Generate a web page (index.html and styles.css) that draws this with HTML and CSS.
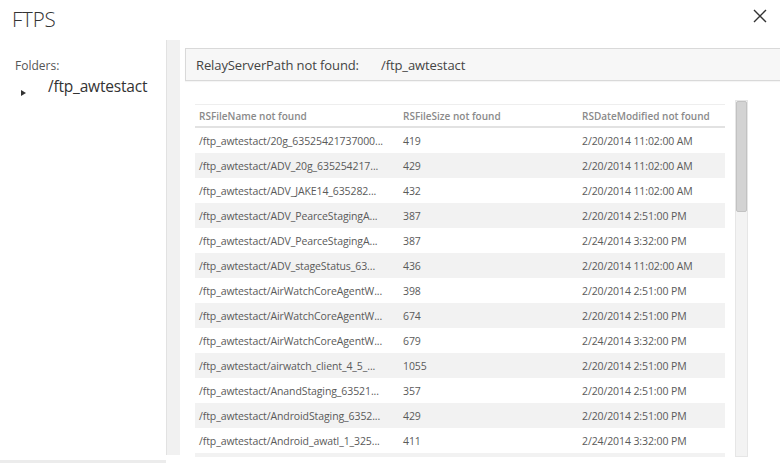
FILE: index.html
```html
<!DOCTYPE html>
<html>
<head>
<meta charset="utf-8">
<link rel="stylesheet" href="styles.css">
</head>
<body>
<div class="dialog">
  <div class="header">
    <div class="title">FTPS</div>
    <svg class="close" width="14" height="14" viewBox="0 0 14 14"><path d="M1 1L13 13M13 1L1 13" stroke="#333" stroke-width="1.4" fill="none"/></svg>
  </div>
  <div class="body">
    <div class="sidebar">
      <div class="folders-label">Folders:</div>
      <div class="folder">
        <span class="caret"></span>
        <span class="folder-name">/ftp_awtestact</span>
      </div>
    </div>
    <div class="splitter"></div>
    <div class="main">
      <div class="relay">
        <span class="relay-label">RelayServerPath not found:</span>
        <span class="relay-value">/ftp_awtestact</span>
      </div>
      <div class="grid-wrap">
        <div class="grid">
          <div class="row head">
            <div class="c1">RSFileName not found</div>
            <div class="c2">RSFileSize not found</div>
            <div class="c3">RSDateModified not found</div>
          </div>
          <div class="row"><div class="c1">/ftp_awtestact/20g_63525421737000...</div><div class="c2">419</div><div class="c3">2/20/2014 11:02:00 AM</div></div>
          <div class="row alt"><div class="c1">/ftp_awtestact/ADV_20g_635254217...</div><div class="c2">429</div><div class="c3">2/20/2014 11:02:00 AM</div></div>
          <div class="row"><div class="c1">/ftp_awtestact/ADV_JAKE14_635282...</div><div class="c2">432</div><div class="c3">2/20/2014 11:02:00 AM</div></div>
          <div class="row alt"><div class="c1">/ftp_awtestact/ADV_PearceStagingA...</div><div class="c2">387</div><div class="c3">2/20/2014 2:51:00 PM</div></div>
          <div class="row"><div class="c1">/ftp_awtestact/ADV_PearceStagingA...</div><div class="c2">387</div><div class="c3">2/24/2014 3:32:00 PM</div></div>
          <div class="row alt"><div class="c1">/ftp_awtestact/ADV_stageStatus_63...</div><div class="c2">436</div><div class="c3">2/20/2014 11:02:00 AM</div></div>
          <div class="row"><div class="c1">/ftp_awtestact/AirWatchCoreAgentW...</div><div class="c2">398</div><div class="c3">2/20/2014 2:51:00 PM</div></div>
          <div class="row alt"><div class="c1">/ftp_awtestact/AirWatchCoreAgentW...</div><div class="c2">674</div><div class="c3">2/20/2014 2:51:00 PM</div></div>
          <div class="row"><div class="c1">/ftp_awtestact/AirWatchCoreAgentW...</div><div class="c2">679</div><div class="c3">2/24/2014 3:32:00 PM</div></div>
          <div class="row alt"><div class="c1">/ftp_awtestact/airwatch_client_4_5_...</div><div class="c2">1055</div><div class="c3">2/20/2014 2:51:00 PM</div></div>
          <div class="row"><div class="c1">/ftp_awtestact/AnandStaging_63521...</div><div class="c2">357</div><div class="c3">2/20/2014 2:51:00 PM</div></div>
          <div class="row alt"><div class="c1">/ftp_awtestact/AndroidStaging_6352...</div><div class="c2">429</div><div class="c3">2/20/2014 2:51:00 PM</div></div>
          <div class="row"><div class="c1">/ftp_awtestact/Android_awatl_1_325...</div><div class="c2">411</div><div class="c3">2/24/2014 3:32:00 PM</div></div>
          <div class="row alt"><div class="c1">&nbsp;</div><div class="c2"></div><div class="c3"></div></div>
        </div>
        <div class="scrollbar"><div class="thumb"></div></div>
      </div>
    </div>
  </div>
</div>
</body>
</html>
```

FILE: styles.css
```css
html, body {
  margin: 0;
  padding: 0;
  background: #fff;
}
body {
  font-family: "Open Sans", "Noto Sans", sans-serif;
  color: #444;
  width: 780px;
  height: 469px;
  overflow: hidden;
}
.dialog {
  display: flex;
  flex-direction: column;
  height: 469px;
}
.header {
  height: 40px;
  display: flex;
  align-items: flex-start;
  justify-content: space-between;
  flex: none;
}
.title {
  margin: 5px 0 0 12px;
  font-size: 20.5px;
  font-weight: 300;
  color: #333;
  letter-spacing: -0.2px;
}
.close {
  margin: 9px 13px 0 0;
}
.body {
  display: flex;
  flex: 1;
  min-height: 0;
}
.sidebar {
  width: 166px;
  height: 423px;
  flex: none;
  border-bottom: 3px solid #ececec;
  box-sizing: border-box;
}
.folders-label {
  margin: 17px 0 0 15px;
  font-size: 12px;
  color: #555;
}
.folder {
  display: flex;
  align-items: flex-start;
  margin-top: 1px;
}
.caret {
  width: 0;
  height: 0;
  border-top: 3.5px solid transparent;
  border-bottom: 3.5px solid transparent;
  border-left: 5px solid #333;
  margin: 15px 0 0 21px;
}
.folder-name {
  margin-left: 22px;
  font-size: 15.5px;
  color: #333;
  letter-spacing: -0.2px;
}
.splitter {
  width: 13px;
  height: 415px;
  flex: none;
  background: #f1f1f1;
  border-left: 1px solid #e2e2e2;
}
.main {
  flex: 1;
  padding: 8px 0 0 5px;
  min-width: 0;
}
.relay {
  height: 31px;
  display: flex;
  align-items: center;
  background: #f7f7f7;
  border: 1px solid #d9d9d9;
  border-right: none;
  box-shadow: 0 1px 1px rgba(0,0,0,0.04);
  font-size: 13px;
  color: #444;
  padding-left: 10px;
}
.relay-label {
  width: 185px;
  flex: none;
  letter-spacing: -0.1px;
}
.relay-value {
  letter-spacing: -0.1px;
}
.grid-wrap {
  display: flex;
  margin: 19px 0 0 10px;
  height: 357px;
  overflow: hidden;
}
.grid {
  width: 530px;
  flex: none;
  padding-top: 4px;
  overflow: hidden;
}
.row {
  display: flex;
  height: 25px;
  align-items: center;
  font-size: 10.5px;
  color: #5a5a5a;
  letter-spacing: -0.1px;
  white-space: nowrap;
}
.row.alt {
  background: #f2f2f2;
}
.row.head {
  height: 21px;
  border-top: 1px solid #eeeeee;
  border-bottom: 2px solid #e2e2e2;
  color: #8a8a8a;
  font-weight: 600;
  font-size: 10px;
  letter-spacing: 0;
}
.c1 {
  width: 208px;
  padding-left: 4px;
  box-sizing: border-box;
  overflow: hidden;
}
.c2 {
  width: 179px;
}
.c3 {
  flex: 1;
}
.scrollbar {
  width: 13px;
  margin-left: 10px;
  height: 357px;
  background: #f3f3f3;
  border: 1px solid #e6e6e6;
  box-sizing: border-box;
  flex: none;
}
.thumb {
  height: 111px;
  background: #d3d3d3;
  border: 1px solid #c2c2c2;
  border-radius: 2px;
  box-sizing: border-box;
}
```
